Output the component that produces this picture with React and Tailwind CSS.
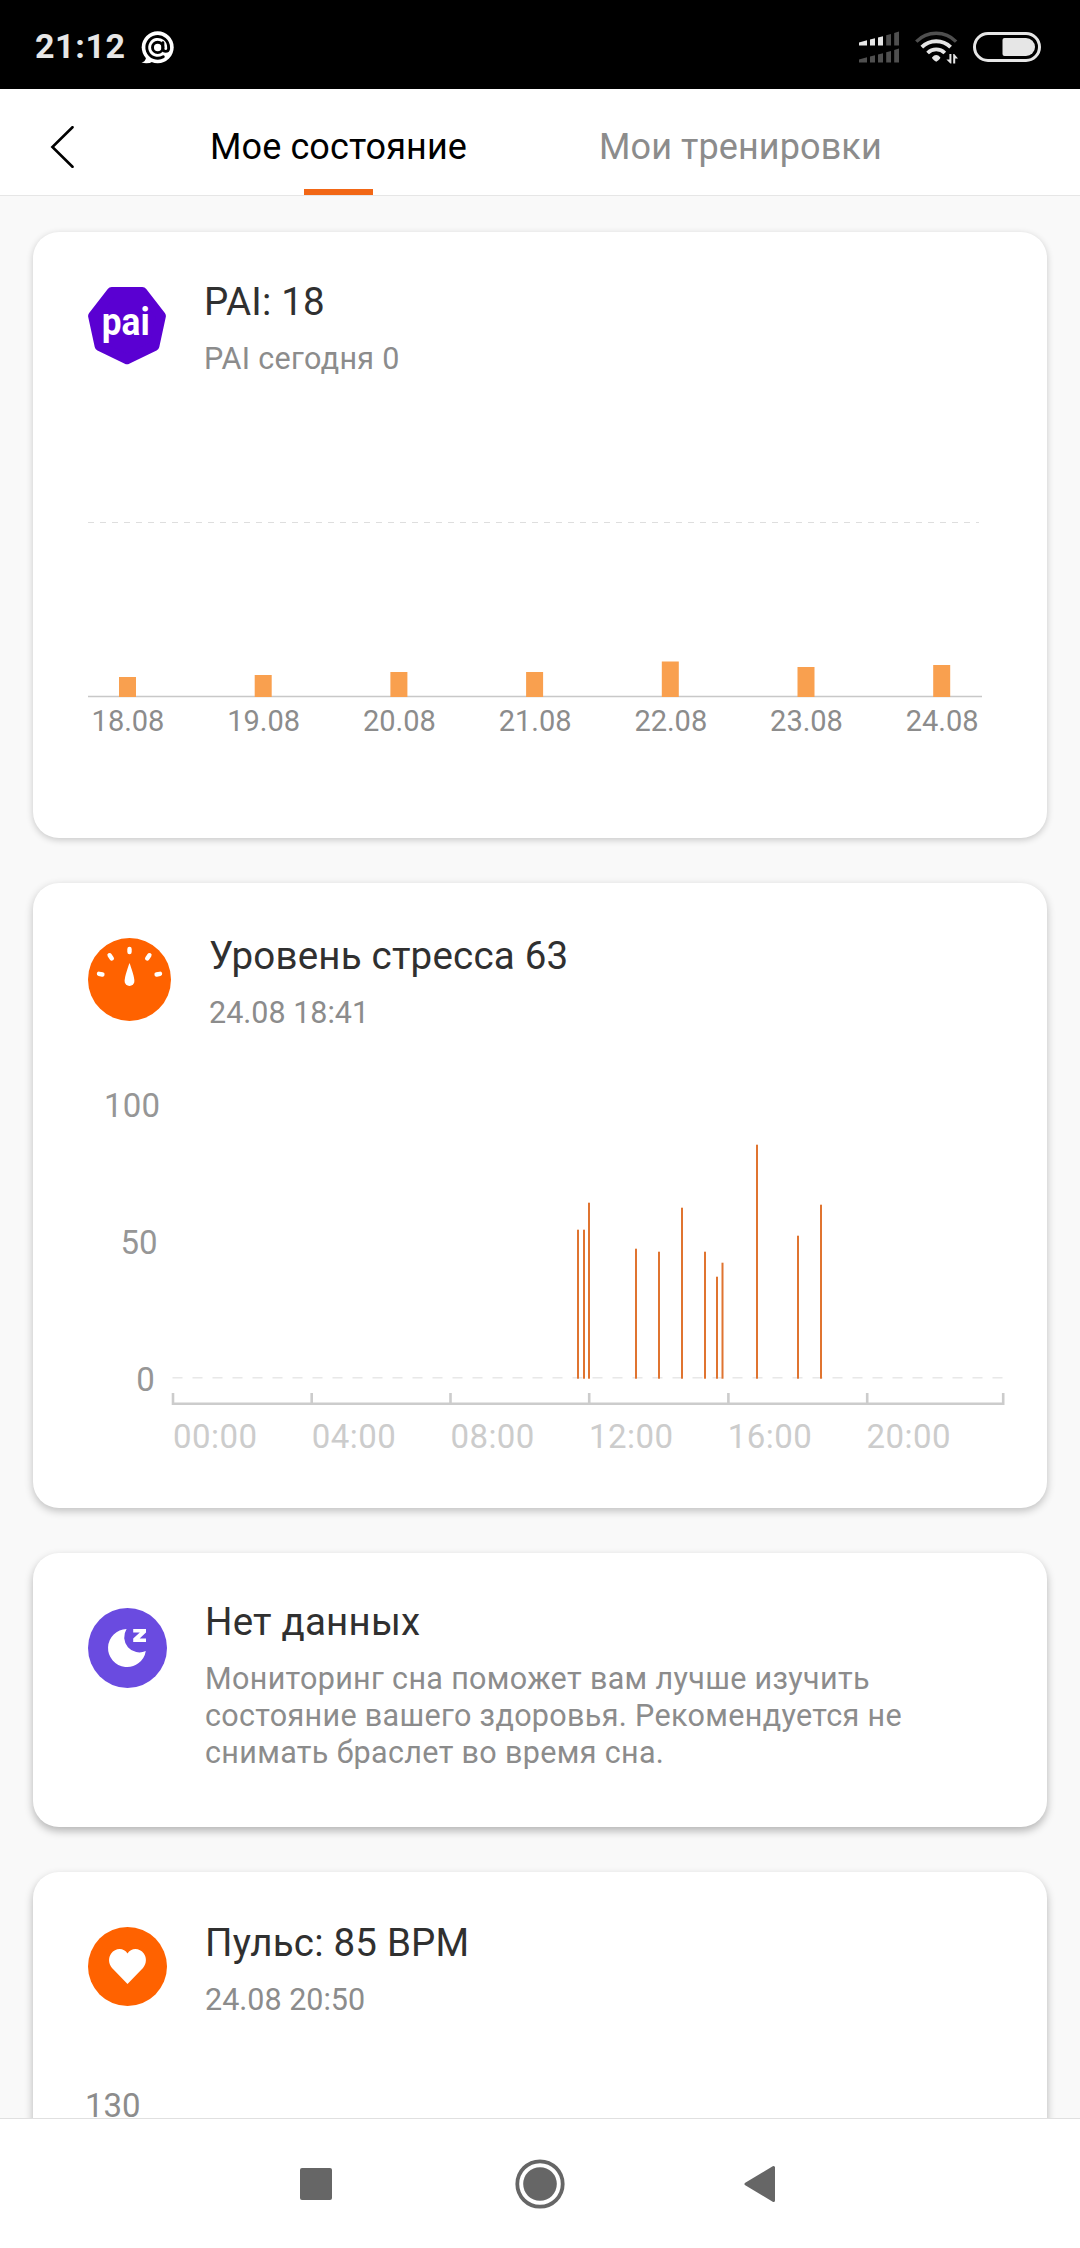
import React from 'react';

const paiDays = [
  { label: '18.08', height: 20 },
  { label: '19.08', height: 22 },
  { label: '20.08', height: 25 },
  { label: '21.08', height: 25 },
  { label: '22.08', height: 35.5 },
  { label: '23.08', height: 30 },
  { label: '24.08', height: 32 },
];

// x offset inside the plot and height of every stress reading
const stressReadings = [
  { x: 490, height: 149 },
  { x: 496, height: 149 },
  { x: 501, height: 176 },
  { x: 548, height: 130 },
  { x: 571, height: 127 },
  { x: 594, height: 171 },
  { x: 617, height: 127 },
  { x: 629, height: 102 },
  { x: 634.5, height: 116 },
  { x: 669, height: 234 },
  { x: 710, height: 143 },
  { x: 733, height: 174 },
];

const hours = ['00:00', '04:00', '08:00', '12:00', '16:00', '20:00'];

const MailAgentIcon = () => (
  <svg className="w-[33px] h-[33px]" viewBox="0 0 33 33">
    <circle cx="16.7" cy="16.2" r="16" fill="#fff" />
    <path d="M3 22 L5 27 Q4 31 0.5 31.6 Q7 33.5 12 30.5 Z" fill="#fff" />
    <g fill="none" stroke="#000" strokeWidth="2.9" strokeLinecap="round">
      <circle cx="16.7" cy="16.4" r="5.2" />
      <path d="M21.9 11.8 V18 A2.9 2.9 0 0 0 27.6 18 V16.4 A10.9 10.9 0 1 0 22.3 25.7" />
    </g>
  </svg>
);

const SignalIcon = () => (
  <svg className="w-10 h-8" viewBox="0 0 40 32">
    <g fill="#e6e6e6">
      <path d="M0 11.5 L8 9.3 V14.5 H0 Z" />
      <path d="M11 8.6 L16 7.3 V14.5 H11 Z" />
      <path d="M19 6.5 L24 5.2 V14.5 H19 Z" />
    </g>
    <g fill="#4f4f4f">
      <path d="M27.2 4.3 L32 3 V14.5 H27.2 Z" />
      <path d="M35.2 2 L40 0.6 V14.5 H35.2 Z" />
      <path d="M0 28.5 L8 26.3 V31.5 H0 Z" />
      <path d="M11 25.6 L16 24.3 V31.5 H11 Z" />
      <path d="M19 23.5 L24 22.2 V31.5 H19 Z" />
      <path d="M27.2 21.3 L32 20 V31.5 H27.2 Z" />
      <path d="M35.2 19 L40 17.6 V31.5 H35.2 Z" />
    </g>
  </svg>
);

const WifiIcon = () => (
  <svg className="w-[43px] h-[34px]" viewBox="0 0 43 34">
    <g fill="none" strokeWidth="3.4">
      <path d="M1.3 11.6 A28 28 0 0 1 41.1 11.6" stroke="#4f4f4f" />
      <path d="M6.8 17.2 A20.4 20.4 0 0 1 35.6 17.2" stroke="#e6e6e6" strokeWidth="3.8" />
      <path d="M12.6 23 A12.2 12.2 0 0 1 29.8 23" stroke="#e6e6e6" strokeWidth="3.8" />
    </g>
    <path d="M17 27.4 Q21.2 22.8 25.4 27.4 Q25.6 28.6 21.2 31.8 Q16.8 28.6 17 27.4 Z" fill="#e6e6e6" />
    <path d="M34.4 24 H36.4 V33.6 H35.4 L31.4 29.4 H34.4 Z M38.2 24 H39.2 L43 28.4 H40.2 V33.6 H38.2 Z" fill="#e6e6e6" />
  </svg>
);

const BatteryIcon = () => (
  <svg className="w-[68px] h-[30px]" viewBox="0 0 68 30">
    <rect x="1.5" y="1.5" width="65" height="27" rx="13.5" fill="none" stroke="#e6e6e6" strokeWidth="3" />
    <path d="M31.5 6 H53 A9 9 0 0 1 53 24 H31.5 Q29.5 24 29.5 22 V8 Q29.5 6 31.5 6 Z" fill="#e6e6e6" />
  </svg>
);

const PaiIcon = () => (
  <svg className="w-[78px] h-[78px]" viewBox="0 0 78 78">
    <path
      d="M39 72.2 L66.4 58.9 L72.9 29 L54.3 5.1 H23.7 L5.1 29 L11.6 58.9 Z"
      fill="#5a00d2"
      stroke="#5a00d2"
      strokeWidth="10"
      strokeLinejoin="round"
    />
    <text x="37.8" y="47.7" textAnchor="middle" textLength="48" lengthAdjust="spacingAndGlyphs" fill="#fff" className="font-bold text-[38px]">
      pai
    </text>
  </svg>
);

const StressIcon = () => (
  <svg className="w-[83px] h-[83px]" viewBox="0 0 83 83">
    <circle cx="41.5" cy="41.5" r="41.5" fill="#ff6200" />
    <g stroke="#fff" strokeWidth="4.4" strokeLinecap="round">
      <path d="M41.5 11 V14" />
      <path d="M21.6 17.2 L23.8 20.5" />
      <path d="M61.4 17.2 L59.2 20.5" />
      <path d="M11 35.8 L14.4 36.5" />
      <path d="M72 35.8 L68.6 36.5" />
    </g>
    <path d="M41.5 25 C43 29 46.4 39 46.4 43 A4.9 5 0 0 1 36.6 43 C36.6 39 40 29 41.5 25 Z" fill="#fff" />
  </svg>
);

const SleepIcon = () => (
  <svg className="w-[79px] h-20" viewBox="0 0 79 80">
    <ellipse cx="39.5" cy="40" rx="39.5" ry="40" fill="#6a4be0" />
    <path d="M38.6 21 A19 19 0 1 0 57.8 43 A15.2 15.2 0 0 1 38.6 21 Z" fill="#fff" />
    <path d="M45.2 21 H58 V24.4 L51.6 30.4 H58 V34 H45.2 V30.6 L51.8 24.6 H45.2 Z" fill="#fff" />
  </svg>
);

const PulseIcon = () => (
  <svg className="w-[79px] h-[79px]" viewBox="0 0 79 79">
    <circle cx="39.5" cy="39.5" r="39.5" fill="#ff6200" />
    <path
      d="M39.5 57 L24 41 C20.5 37 20 31 23.2 26.6 C27.4 20.6 36 20.6 39.5 26.6 C43 20.6 51.6 20.6 55.8 26.6 C59 31 58.5 37 55 41 Z"
      fill="#fff"
    />
  </svg>
);

const CardHeader = ({ icon, title, date, children }) => (
  <div className="flex items-start gap-[38px] pl-[55px]">
    {icon}
    <div className="flex flex-col gap-[15px] pr-10">
      <h2 className="text-[38.5px] leading-[46px] tracking-[0.2px] text-[#303030]">{title}</h2>
      {date && <p className="text-[30.5px] leading-[37px] text-[#8c8c8c]">{date}</p>}
      {children && <p className="text-[30.5px] leading-[37px] tracking-[0.34px] text-[#8c8c8c]">{children}</p>}
    </div>
  </div>
);

const PaiChart = () => (
  <svg className="mt-[143px] ml-[55px] w-[894px] h-[230px]" viewBox="0 0 894 230">
    <path d="M0 2.5 H891" stroke="#dedede" strokeWidth="1.2" strokeDasharray="6 6" />
    <path d="M0 176.5 H894" stroke="#c8c8c8" strokeWidth="1.3" />
    {paiDays.map((day, idx) => (
      <g key={day.label}>
        <rect x={31 + idx * 135.7} y={177 - day.height} width="17" height={day.height} fill="#f9a04f" />
        <text x={40 + idx * 135.7} y="210.7" textAnchor="middle" fill="#8c8c8c" className="text-[29px]">
          {day.label}
        </text>
      </g>
    ))}
  </svg>
);

const StressChart = () => (
  <svg className="mt-[54px] ml-[55px] w-[924px] h-[380px]" viewBox="0 0 924 380">
    <g fill="#969696" className="text-[33px]">
      <text x="16" y="31.7" textLength="56">100</text>
      <text x="32.5" y="169">50</text>
      <text x="48.2" y="306">0</text>
    </g>
    <path d="M84.5 292.7 H915" stroke="#e8e8e8" strokeWidth="1.6" strokeDasharray="10 10" />
    {stressReadings.map((r) => (
      <rect key={r.x} x={r.x - 1} y={293.7 - r.height} width="2" height={r.height} fill="#e07430" />
    ))}
    <path
      d="M85 308 V318.7 H915.2 V308 M223.7 308 V318 M362.5 308 V318 M501.2 308 V318 M640.4 308 V318 M779.2 308 V318"
      fill="none"
      stroke="#ccc"
      strokeWidth="2.6"
    />
    {hours.map((hour, idx) => (
      <text key={hour} x={85 + idx * 138.7} y="363" fill="#ccc" textLength="84" className="text-[33px]">
        {hour}
      </text>
    ))}
  </svg>
);

export default function App() {
  return (
    <div className="w-[1080px] h-[2248px] flex flex-col overflow-hidden bg-[#f9f9f9] font-[Roboto,sans-serif]">
      {/* Status bar */}
      <div className="h-[89px] shrink-0 bg-black flex items-center pl-[35px] pr-[39px] pb-[1px]">
        <span className="text-[34px] leading-[40px] pt-[3px] font-bold tracking-[0.6px] text-[#e6e6e6]">21:12</span>
        <div className="ml-[15px] pt-[6px]"><MailAgentIcon /></div>
        <div className="ml-auto flex items-center pt-[6px]">
          <SignalIcon />
          <div className="ml-4 mr-[15px]"><WifiIcon /></div>
          <BatteryIcon />
        </div>
      </div>

      {/* Tabs */}
      <div className="h-[107px] shrink-0 bg-white border-b border-[#e6e6e6] flex">
        <svg className="w-6 h-[42px] mt-[37px] ml-[50px]" viewBox="0 0 24 42">
          <path d="M22.5 1.2 L2.4 21 L22.5 40.8" fill="none" stroke="#000" strokeWidth="2.6" strokeLinecap="round" />
        </svg>
        <div className="ml-[134px] w-[261px] flex flex-col items-center justify-between">
          <span className="mt-[36px] text-[36px] leading-[44px] tracking-[0.1px] whitespace-nowrap text-black">Мое состояние</span>
          <div className="w-[69px] h-[6px] bg-[#f26716]" />
        </div>
        <span className="ml-[130px] mt-[36px] text-[36px] leading-[44px] tracking-[0.1px] whitespace-nowrap text-[#8c8c8c]">Мои тренировки</span>
      </div>

      {/* Cards */}
      <div className="flex-1 min-h-0 overflow-hidden flex flex-col gap-[45px] px-[33px] pt-9">
        <div className="h-[606px] shrink-0 rounded-[26px] bg-white pt-[47px] shadow-[0_2px_7px_rgba(0,0,0,0.2)]">
          <CardHeader icon={<div className="pt-2"><PaiIcon /></div>} title="PAI: 18">PAI сегодня 0</CardHeader>
          <PaiChart />
        </div>

        <div className="h-[625px] shrink-0 rounded-[26px] bg-white pt-[50px] shadow-[0_3px_8px_rgba(0,0,0,0.24)]">
          <CardHeader icon={<div className="pt-[5px] h-[88px]"><StressIcon /></div>} title="Уровень стресса 63" date="24.08 18:41" />
          <StressChart />
        </div>

        <div className="h-[274px] shrink-0 rounded-[26px] bg-white pt-[46px] shadow-[0_4px_9px_rgba(0,0,0,0.28)]">
          <CardHeader icon={<div className="pt-[9px]"><SleepIcon /></div>} title="Нет данных">
            Мониторинг сна поможет вам лучше изучить<br />
            состояние вашего здоровья. Рекомендуется не<br />
            снимать браслет во время сна.
          </CardHeader>
        </div>

        <div className="h-[625px] shrink-0 rounded-[26px] bg-white pt-[48px] shadow-[0_4px_9px_rgba(0,0,0,0.28)]">
          <CardHeader icon={<div className="pt-[7px]"><PulseIcon /></div>} title="Пульс: 85 BPM" date="24.08 20:50" />
          <div className="mt-[68px] ml-[52px] text-[33px] leading-[40px] text-[#8c8c8c]">130</div>
        </div>
      </div>

      {/* System navigation */}
      <div className="h-[130px] shrink-0 bg-white border-t border-[#e0e0e0] flex items-center pl-[300px]">
        <div className="size-8 rounded-[2px] bg-[#666]" />
        <svg className="ml-[183px] size-[50px]" viewBox="0 0 50 50">
          <circle cx="25" cy="25" r="22.7" fill="none" stroke="#666" strokeWidth="3.8" />
          <circle cx="25" cy="25" r="16.8" fill="#666" />
        </svg>
        <svg className="ml-[179px] w-8 h-[38px]" viewBox="0 0 32 38">
          <path d="M2 19 L29.5 2.5 V35.5 Z" fill="#666" stroke="#666" strokeWidth="3" strokeLinejoin="round" />
        </svg>
      </div>
    </div>
  );
}
